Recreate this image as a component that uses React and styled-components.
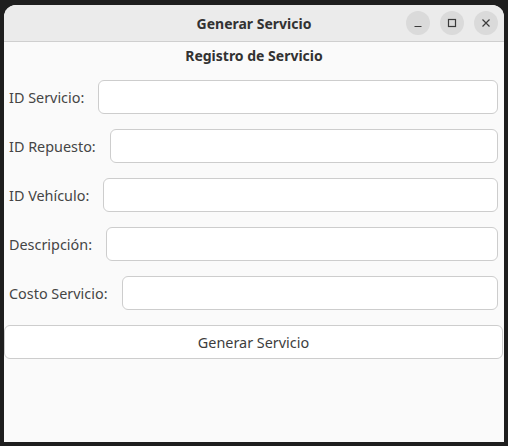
import React from "react";
import styled, { createGlobalStyle } from "styled-components";

const GlobalStyle = createGlobalStyle`
  html, body {
    margin: 0;
    padding: 0;
    background: #1e1e1e;
    font-family: "Noto Sans", "Open Sans", sans-serif;
  }
`;

const Screen = styled.div`
  width: 508px;
  height: 446px;
  padding: 5px 4px 0 4px;
  box-sizing: border-box;
`;

const Window = styled.div`
  width: 500px;
  height: 437px;
  background: #fafafa;
  border-radius: 12px 12px 0 0;
  overflow: hidden;
  display: flex;
  flex-direction: column;
`;

const TitleBar = styled.div`
  height: 36px;
  flex-shrink: 0;
  background: #ebebeb;
  border-bottom: 1px solid #cfcfcf;
  position: relative;
  display: flex;
  align-items: center;
  justify-content: center;
`;

const WindowTitle = styled.div`
  font-size: 14px;
  font-weight: 700;
  color: #323232;
`;

const Controls = styled.div`
  position: absolute;
  right: 6px;
  top: 6px;
  display: flex;
  gap: 10px;
`;

const CircleButton = styled.div`
  width: 24px;
  height: 24px;
  border-radius: 50%;
  background: #dadada;
  display: flex;
  align-items: center;
  justify-content: center;
  color: #3a3a3a;
`;

const Content = styled.div`
  display: flex;
  flex-direction: column;
  gap: 15px;
`;

const Heading = styled.div`
  height: 28px;
  line-height: 28px;
  margin-bottom: -5px;
  text-align: center;
  font-size: 14px;
  font-weight: 700;
  color: #323232;
`;

const Row = styled.div`
  display: flex;
  align-items: center;
  gap: 14px;
  padding: 0 6px 0 5px;
`;

const Label = styled.label`
  font-size: 14.4px;
  color: #454545;
  white-space: nowrap;
`;

const Entry = styled.input`
  flex: 1;
  height: 34px;
  box-sizing: border-box;
  border: 1px solid #cdcdcd;
  border-radius: 6px;
  background: #ffffff;
  outline: none;
`;

const ActionButton = styled.button`
  height: 34px;
  margin-right: 1px;
  border: 1px solid #cdcdcd;
  border-radius: 6px;
  background: #ffffff;
  font-family: inherit;
  font-size: 14.4px;
  color: #3d3d3d;
`;

const fields = [
  "ID Servicio:",
  "ID Repuesto:",
  "ID Vehículo:",
  "Descripción:",
  "Costo Servicio:",
];

export default function App() {
  return (
    <>
      <GlobalStyle />
      <Screen>
        <Window>
          <TitleBar>
            <WindowTitle>Generar Servicio</WindowTitle>
            <Controls>
              <CircleButton>
                <svg width="10" height="10" viewBox="0 0 10 10">
                  <path d="M1.5 8.5h7" stroke="currentColor" strokeWidth="1.2" />
                </svg>
              </CircleButton>
              <CircleButton>
                <svg width="10" height="10" viewBox="0 0 10 10">
                  <rect x="1.5" y="1.5" width="7" height="7" fill="none" stroke="currentColor" strokeWidth="1.2" />
                </svg>
              </CircleButton>
              <CircleButton>
                <svg width="10" height="10" viewBox="0 0 10 10">
                  <path d="M1.5 1.5l7 7M8.5 1.5l-7 7" stroke="currentColor" strokeWidth="1.2" />
                </svg>
              </CircleButton>
            </Controls>
          </TitleBar>
          <Content>
            <Heading>Registro de Servicio</Heading>
            {fields.map((f) => (
              <Row key={f}>
                <Label>{f}</Label>
                <Entry type="text" />
              </Row>
            ))}
            <ActionButton>Generar Servicio</ActionButton>
          </Content>
        </Window>
      </Screen>
    </>
  );
}
